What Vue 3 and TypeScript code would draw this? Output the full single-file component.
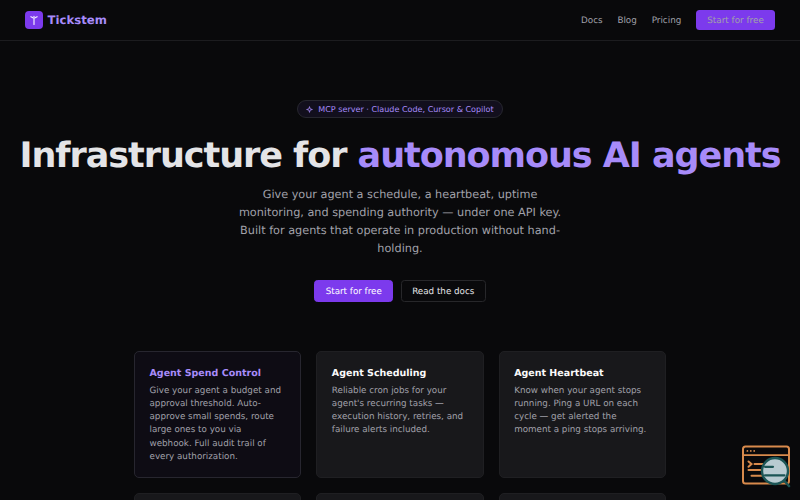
<template>
    <div class="page">
        <header class="nav">
            <div class="brand">
                <span class="logo">
                    <svg viewBox="0 0 18 18" width="18" height="18" fill="none" stroke="#f1eaff" stroke-linecap="round">
                        <path d="M9 13.5V7.2M5.9 5.7L9 7.4L12.1 5.7" stroke-width="1.2" />
                        <circle cx="9" cy="5.4" r=".7" fill="#f1eaff" stroke="none" />
                    </svg>
                </span>
                <span class="brand-name">Tickstem</span>
            </div>
            <nav class="links">
                <a v-for="link in links" :key="link">{{ link }}</a>
                <a class="nav-cta">Start for free</a>
            </nav>
        </header>
        <main>
            <section class="hero">
                <div class="badge">
                    <svg viewBox="0 0 8 8" width="7" height="7" fill="none" stroke="#a78bfa" stroke-width=".9">
                        <path d="M4 .7L4.7 3.3L7.3 4L4.7 4.7L4 7.3L3.3 4.7L.7 4L3.3 3.3Z" />
                    </svg>
                    <span>MCP server · Claude Code, Cursor &amp; Copilot</span>
                </div>
                <h1>Infrastructure for <span>autonomous AI agents</span></h1>
                <p class="lead">Give your agent a schedule, a heartbeat, uptime monitoring, and spending authority — under one API key. Built for agents that operate in production without hand-holding.</p>
                <div class="actions">
                    <a class="btn primary">Start for free</a>
                    <a class="btn">Read the docs</a>
                </div>
            </section>
            <section class="cards">
                <article v-for="card in cards" :key="card.title" class="card" :class="{ featured: card.featured }">
                    <h2>{{ card.title }}</h2>
                    <p>{{ card.text }}</p>
                </article>
                <article v-for="n in 3" :key="n" class="card"></article>
            </section>
        </main>
        <svg class="widget" viewBox="0 0 50 44" width="50" height="44" fill="none" stroke-linecap="round">
            <rect x="2" y="2.6" width="46" height="37" rx="2.5" stroke="#d88a4c" stroke-width="2" />
            <path d="M2.5 11.2H47.5" stroke="#d88a4c" stroke-width="1.8" />
            <g fill="#d88a4c">
                <circle cx="6.4" cy="6.9" r=".9" />
                <circle cx="9.8" cy="6.9" r=".9" />
                <circle cx="13.2" cy="6.9" r=".9" />
            </g>
            <path d="M7.5 17.5L10.5 20L7.5 22.8M13.5 20H22M7.5 26H19.5M10.5 31.8H20.5" stroke="#d88a4c" stroke-width="2" />
            <circle cx="34" cy="27" r="13" fill="#b9cbd1" stroke="#1c5555" stroke-width="2.4" />
            <path d="M43.5 37L48 42" stroke="#1c5555" stroke-width="2.6" />
            <path d="M24 22.8H32M24 31.3H43.5" stroke="#1c5555" stroke-width="2.2" />
        </svg>
    </div>
</template>
<script setup lang="ts">
interface Card {
    title: string;
    text: string;
    featured?: boolean;
}

const links: string[] = ['Docs', 'Blog', 'Pricing']

const cards: Card[] = [
    {
        title: 'Agent Spend Control',
        text: 'Give your agent a budget and approval threshold. Auto-approve small spends, route large ones to you via webhook. Full audit trail of every authorization.',
        featured: true,
    },
    {
        title: 'Agent Scheduling',
        text: "Reliable cron jobs for your agent's recurring tasks — execution history, retries, and failure alerts included.",
    },
    {
        title: 'Agent Heartbeat',
        text: 'Know when your agent stops running. Ping a URL on each cycle — get alerted the moment a ping stops arriving.',
    },
]
</script>
<style>
body {
    background: #09090b;
    overflow: hidden;
}
</style>
<style scoped>
.page {
    height: 500px;
    overflow: hidden;
    background: #09090b;
    color: #e4e4e7;
    font-family: "DejaVu Sans", sans-serif;
    font-size: 8.75px;
    text-rendering: geometricPrecision;
}

.nav {
    box-sizing: border-box;
    height: 41px;
    padding: 0 25px;
    display: flex;
    align-items: center;
    justify-content: space-between;
    border-bottom: 1px solid #1c1c1f;
}

.brand {
    display: flex;
    align-items: center;
    gap: 4.5px;
}

.logo {
    width: 18px;
    height: 18px;
    border-radius: 4px;
    background: #7c3aed;
}

.logo svg {
    display: block;
}

.brand-name {
    color: #a78bfa;
    font-size: 11.7px;
    font-weight: 700;
}

.links {
    display: flex;
    align-items: center;
    gap: 14.8px;
    color: #a1a1aa;
    font-size: 8.8px;
    line-height: 22px;
}

.links > a {
    box-sizing: border-box;
    height: 20px;
}

.links > .nav-cta {
    padding: 0 11.2px;
    border-radius: 3.5px;
    background: #7c3aed;
}

.hero {
    display: flex;
    flex-direction: column;
    align-items: center;
    padding-top: 59px;
}

.badge {
    box-sizing: border-box;
    height: 18px;
    padding: 0 8.5px;
    display: flex;
    align-items: center;
    gap: 5px;
    border: 1px solid #27272f;
    border-radius: 9px;
    background: #120f1d;
    color: #a78bfa;
    font-size: 8.06px;
}

h1 {
    margin: 18px 0 0;
    font-size: 35px;
    font-weight: 700;
    line-height: 40px;
    letter-spacing: -1.05px;
    white-space: nowrap;
}

h1 span {
    color: #a78bfa;
}

.lead {
    width: 325px;
    margin: 10px 0 0;
    color: #a1a1aa;
    font-size: 11.25px;
    line-height: 17.9px;
    text-align: center;
}

.actions {
    display: flex;
    gap: 7.5px;
    margin-top: 22.4px;
}

.btn {
    box-sizing: border-box;
    height: 22px;
    padding: 0 10.4px;
    line-height: 22px;
    border: 1px solid #27272a;
    border-radius: 3.5px;
}

.btn.primary {
    background: #7c3aed;
    border-color: #7c3aed;
    color: #fff;
}

.cards {
    width: 532px;
    margin: 49px auto 0;
    display: grid;
    grid-template-columns: repeat(3, 1fr);
    gap: 15px;
}

.card {
    box-sizing: border-box;
    min-height: 126.5px;
    padding: 15px 15px 13px 14.5px;
    border: 1px solid #1f1f22;
    border-radius: 5px;
    background: #18181b;
}

.card.featured {
    background: #0e0c14;
    border-color: #27262f;
}

.card h2 {
    margin: 0 0 4px;
    color: #fafafa;
    font-size: 9.5px;
    font-weight: 700;
    line-height: 14px;
}

.card.featured h2 {
    color: #a78bfa;
}

.card p {
    margin: 0;
    color: #a1a1aa;
    line-height: 13.12px;
}

.widget {
    position: absolute;
    top: 444px;
    left: 741px;
}
</style>
